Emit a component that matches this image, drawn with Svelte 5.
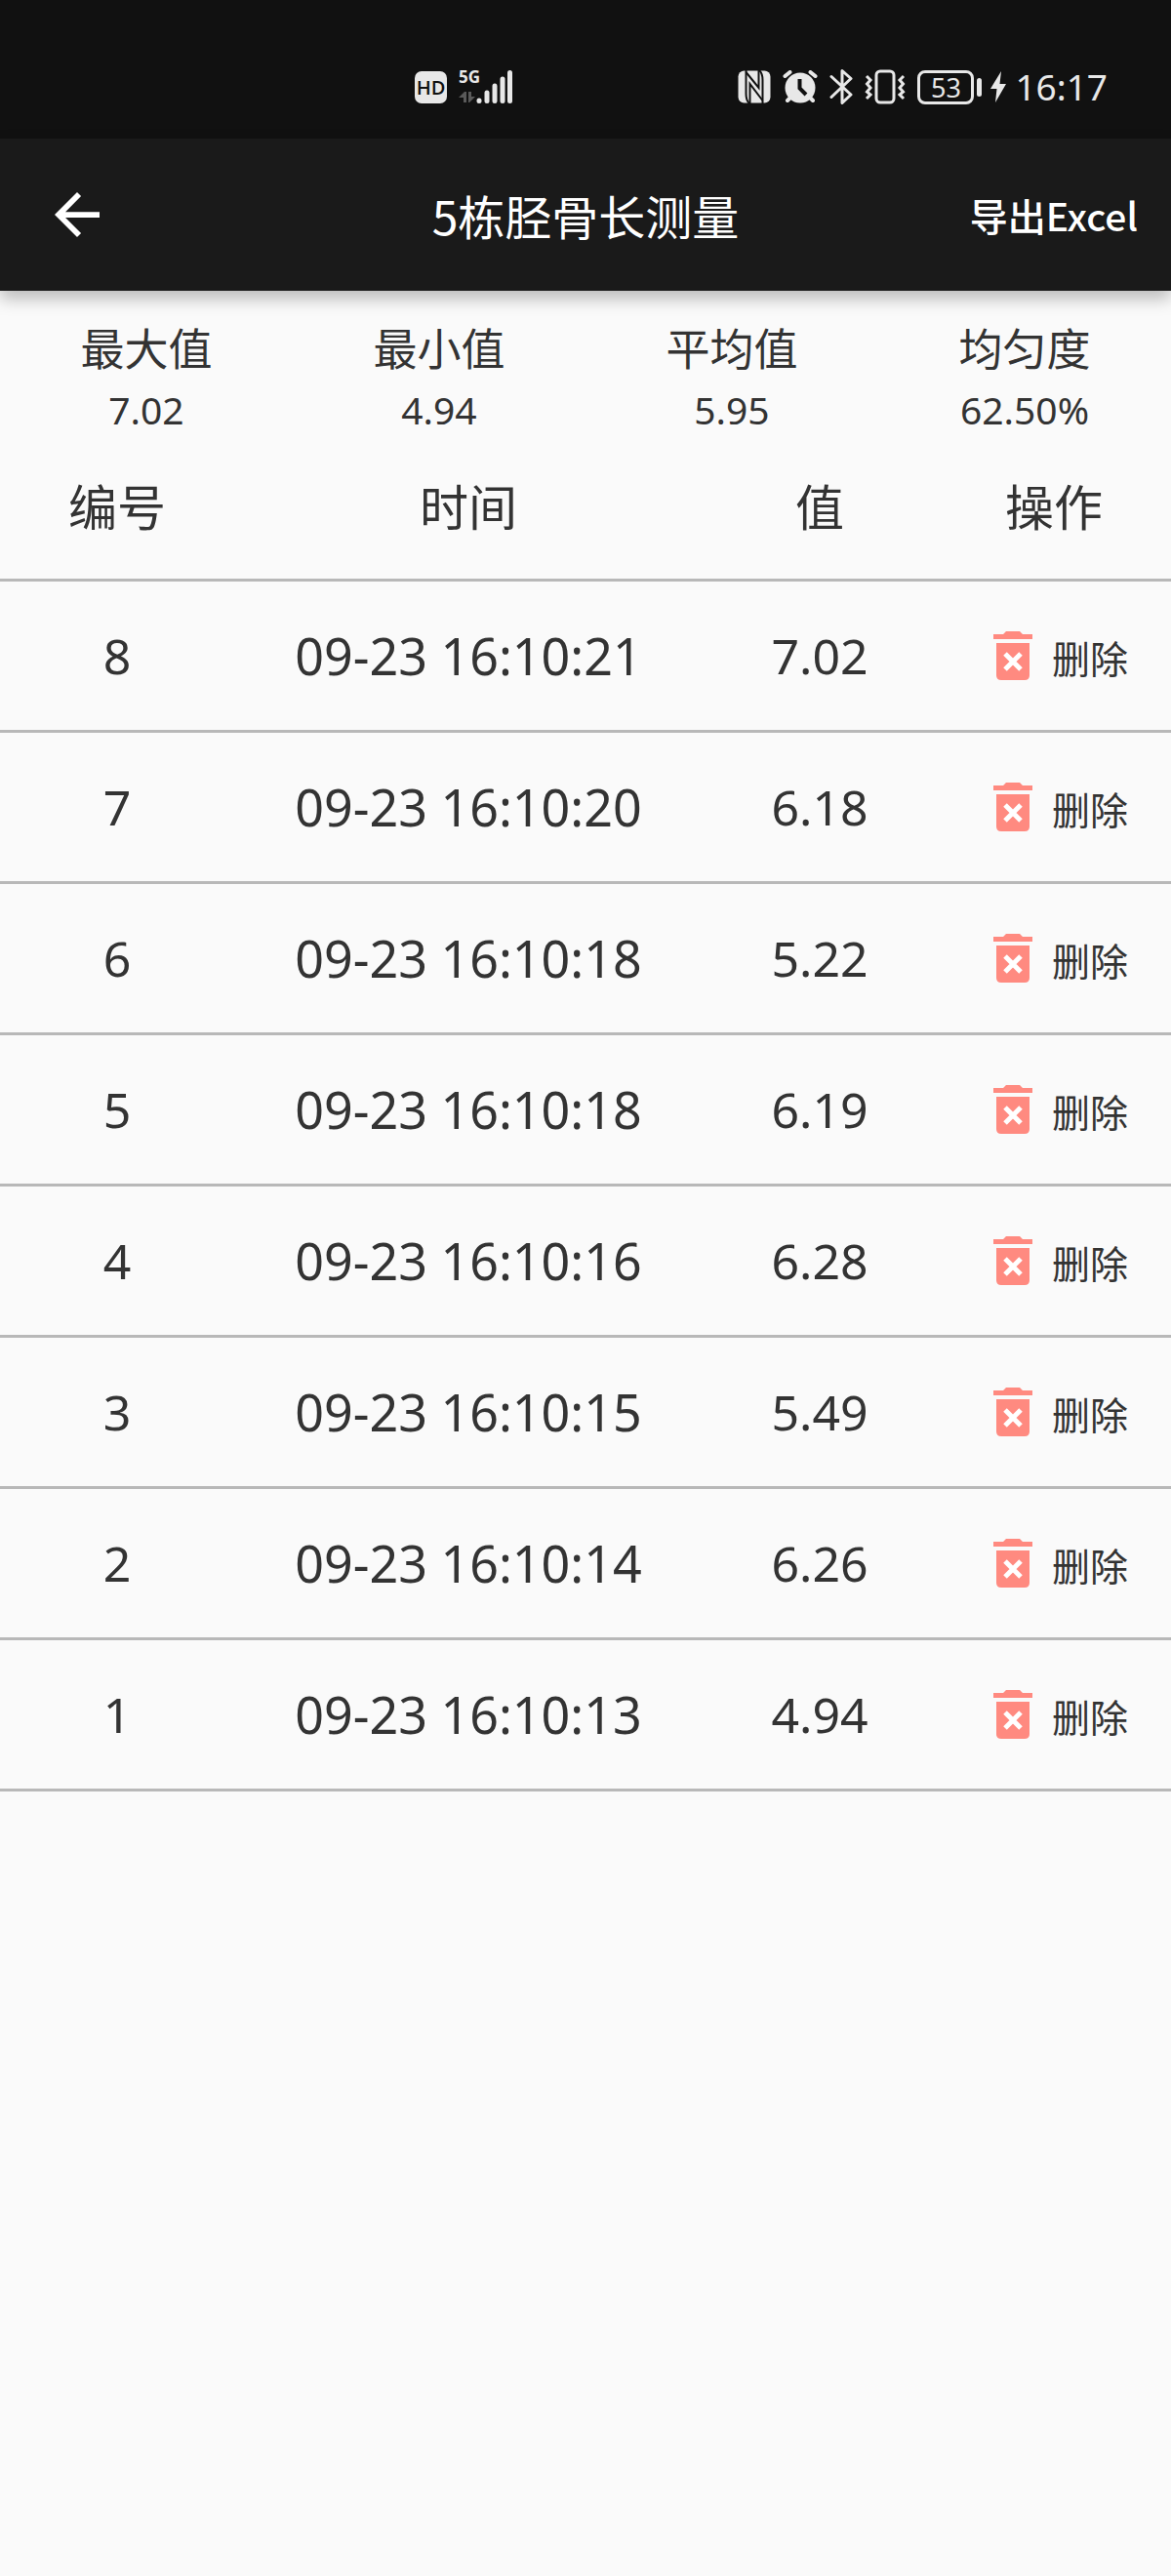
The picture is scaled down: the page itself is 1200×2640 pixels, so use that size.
<script>
  const stats = [
    { label: '最大值', value: '7.02' },
    { label: '最小值', value: '4.94' },
    { label: '平均值', value: '5.95' },
    { label: '均匀度', value: '62.50%' }
  ];

  let rows = $state([
    { id: 8, time: '09-23 16:10:21', value: '7.02' },
    { id: 7, time: '09-23 16:10:20', value: '6.18' },
    { id: 6, time: '09-23 16:10:18', value: '5.22' },
    { id: 5, time: '09-23 16:10:18', value: '6.19' },
    { id: 4, time: '09-23 16:10:16', value: '6.28' },
    { id: 3, time: '09-23 16:10:15', value: '5.49' },
    { id: 2, time: '09-23 16:10:14', value: '6.26' },
    { id: 1, time: '09-23 16:10:13', value: '4.94' }
  ]);

  function remove(id) {
    rows = rows.filter((row) => row.id !== id);
  }
</script>

<div class="screen">
  <div class="status">
    <div class="group">
      <span class="hd">HD</span>
      <span class="network">
        <span class="gen">5G</span>
        <svg width="56" height="36" viewBox="0 0 56 36" aria-hidden="true">
          <g fill="#5a5a5a">
            <path d="M0 29 L6 23 H8 V34 H5 V29 Z" />
            <path d="M10 23 H13 V28 H17 L11 34 H10 Z" />
          </g>
          <g stroke="#e8e8e8" stroke-width="5" stroke-linecap="round">
            <path d="M21 32 V32.500" />
            <path d="M29 24 V32.500" />
            <path d="M37 17 V32.500" />
            <path d="M45 10 V32.500" />
            <path d="M52.500 3.500 V32.500" />
          </g>
        </svg>
      </span>
    </div>
    <div class="group">
      <svg width="34" height="34" viewBox="0 0 34 34" aria-hidden="true">
        <rect x="0.500" y="0.500" width="33" height="33" rx="6" fill="#e8e8e8" />
        <path d="M8.500 0 V24 Q8.500 31 12 34" fill="none" stroke="#111" stroke-width="2" />
        <path d="M22 0 Q25.500 3 25.500 10 V34" fill="none" stroke="#111" stroke-width="2" />
        <path d="M8.500 2 L21.500 18 V0" fill="none" stroke="#111" stroke-width="2" />
        <path d="M25.500 31 L12.500 14 V34" fill="none" stroke="#111" stroke-width="2" />
      </svg>
      <svg width="36" height="34" viewBox="0 0 36 34" aria-hidden="true">
        <circle cx="18" cy="18" r="15.500" fill="#e8e8e8" />
        <path d="M2.500 6 L7.500 2 M28.500 2 L33.500 6 M5 31 L9 27 M31 31 L27 27" stroke="#e8e8e8" stroke-width="4" stroke-linecap="round" />
        <path d="M17.500 9 V18.500 L24 25" fill="none" stroke="#111" stroke-width="4" />
      </svg>
      <svg width="24" height="38" viewBox="0 0 24 38" aria-hidden="true">
        <path d="M2 8.500 L22 27 L13 35.500 V2.500 L22 10.500 L2 29.500" fill="none" stroke="#e8e8e8" stroke-width="3" stroke-linejoin="round" stroke-linecap="round" />
      </svg>
      <svg width="42" height="36" viewBox="0 0 42 36" aria-hidden="true">
        <rect x="12" y="2" width="18" height="32" rx="4" fill="none" stroke="#e8e8e8" stroke-width="3" />
        <path d="M2 7 L6 11 L2.500 15 L6 19 L2.500 23 L6 26 L2 30 M40 7 L36 11 L39.500 15 L36 19 L39.500 23 L36 26 L40 30" fill="none" stroke="#e8e8e8" stroke-width="3" />
      </svg>
      <div class="power">
        <span class="battery"><span class="level">53</span><span class="cap"></span></span>
        <svg width="16" height="32" viewBox="0 0 16 32" aria-hidden="true">
          <path d="M11 0 L0 18 H6.500 L5 32 L16 13 H9.500 Z" fill="#e8e8e8" />
        </svg>
        <span class="clock">16:17</span>
      </div>
    </div>
  </div>

  <header>
    <button class="back" aria-label="返回">
      <svg width="46" height="46" viewBox="4 4 16 16" aria-hidden="true">
        <path d="M20 11H7.830l5.590-5.590L12 4l-8 8 8 8 1.410-1.410L7.830 13H20z" fill="#fff" />
      </svg>
    </button>
    <h1>5栋胫骨长测量</h1>
    <button class="export">导出Excel</button>
  </header>

  <main>
    <dl>
      {#each stats as stat}
        <div>
          <dt>{stat.label}</dt>
          <dd>{stat.value}</dd>
        </div>
      {/each}
    </dl>

    <table>
      <thead>
        <tr>
          <th scope="col">编号</th>
          <th scope="col" class="wide">时间</th>
          <th scope="col">值</th>
          <th scope="col">操作</th>
        </tr>
      </thead>
      <tbody>
        {#each rows as row (row.id)}
          <tr>
            <td>{row.id}</td>
            <td class="time">{row.time}</td>
            <td>{row.value}</td>
            <td>
              <button class="delete" onclick={() => remove(row.id)}>
                <svg width="40" height="52" viewBox="0 0 40 52" aria-hidden="true">
                  <path d="M0 4 H10 L13 1 H27 L30 4 H40 V9 H0 Z" fill="#ff8a80" />
                  <path d="M3 13 H37 V46 Q37 51 32 51 H8 Q3 51 3 46 Z" fill="#ff8a80" />
                  <path d="M12 24 L28 40 M28 24 L12 40" stroke="#fff" stroke-width="5" />
                </svg>
                <span>删除</span>
              </button>
            </td>
          </tr>
        {/each}
      </tbody>
    </table>
  </main>
</div>

<style>
  :global(body) {
    background: #fafafa;
  }

  .screen {
    font-family: 'Noto Sans', 'Noto Sans CJK SC', sans-serif;
    color: #333;
  }

  button {
    border: 0;
    padding: 0;
    background: none;
    color: inherit;
    font: inherit;
    cursor: pointer;
  }

  svg {
    display: block;
    flex: none;
  }

  .status {
    display: flex;
    justify-content: space-between;
    align-items: center;
    box-sizing: border-box;
    height: 142px;
    padding: 36px 65px 0 425px;
    background: #111;
    color: #e8e8e8;
  }

  .group {
    display: flex;
    align-items: center;
    gap: 12px;
  }

  .power {
    display: flex;
    align-items: center;
    gap: 9px;
  }

  .hd {
    width: 33px;
    border-radius: 7px;
    background: #e8e8e8;
    color: #111;
    font-family: 'Open Sans', sans-serif;
    font-size: 20px;
    font-weight: 600;
    line-height: 33px;
    text-align: center;
  }

  .network {
    position: relative;
  }

  .gen {
    position: absolute;
    top: 0;
    left: 0;
    font-family: 'Liberation Sans Narrow', 'Open Sans', sans-serif;
    font-size: 17px;
    font-weight: 700;
    line-height: 16px;
  }

  .battery {
    display: flex;
    align-items: center;
    gap: 3px;
  }

  .level {
    width: 52px;
    border: 3px solid #e8e8e8;
    border-radius: 8px;
    font-size: 27px;
    line-height: 29px;
    text-align: center;
  }

  .cap {
    width: 5px;
    height: 19px;
    border-radius: 3px;
    background: #e8e8e8;
  }

  .clock {
    font-size: 37px;
    line-height: 40px;
  }

  header {
    position: relative;
    display: grid;
    grid-template-columns: 1fr auto 1fr;
    align-items: center;
    height: 156px;
    padding: 0 34px;
    background: #1a1a1a;
    color: #fff;
    box-shadow: 0 8px 16px rgba(0, 0, 0, 0.26);
  }

  .back {
    justify-self: start;
    padding: 0 22px;
  }

  h1 {
    margin: 0;
    font-family: 'Noto Sans CJK SC', sans-serif;
    font-size: 48px;
    font-weight: 400;
    line-height: 60px;
  }

  .export {
    justify-self: end;
    font-family: 'Noto Sans CJK SC', sans-serif;
    font-size: 39px;
    font-weight: 500;
    line-height: 60px;
  }

  dl {
    display: grid;
    grid-template-columns: repeat(4, 1fr);
    margin: 0;
    padding-top: 28px;
    text-align: center;
  }

  dt {
    font-size: 45px;
    line-height: 64px;
  }

  dd {
    margin: 0;
    font-size: 39px;
    line-height: 60px;
  }

  table {
    width: 100%;
    table-layout: fixed;
    border-collapse: separate;
    border-spacing: 0;
    text-align: center;
  }

  th,
  td {
    padding: 0;
    border-bottom: 3px solid #b8b8b8;
  }

  th {
    padding: 34px 0 37px;
    font-size: 50px;
    font-weight: 400;
    line-height: 72px;
  }

  .wide {
    width: 40%;
  }

  td {
    height: 152px;
    font-size: 50px;
    line-height: 72px;
  }

  .time {
    font-size: 52px;
  }

  .delete {
    display: flex;
    justify-content: center;
    align-items: center;
    gap: 20px;
    width: 100%;
    padding-left: 14px;
    font-size: 39px;
  }

  .delete span {
    padding-top: 5px;
  }
</style>
